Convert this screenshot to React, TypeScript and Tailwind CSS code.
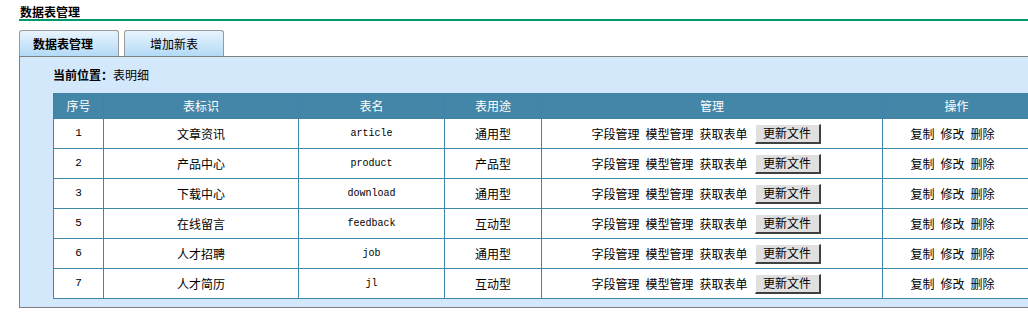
import React from "react";

const rows = [
  { id: "1", label: "文章资讯", name: "article", use: "通用型" },
  { id: "2", label: "产品中心", name: "product", use: "产品型" },
  { id: "3", label: "下载中心", name: "download", use: "通用型" },
  { id: "5", label: "在线留言", name: "feedback", use: "互动型" },
  { id: "6", label: "人才招聘", name: "job", use: "通用型" },
  { id: "7", label: "人才简历", name: "jl", use: "互动型" },
];

const cjk = { fontFamily: '"Noto Sans CJK SC", "Noto Sans", sans-serif' };
const mono = { fontFamily: '"Liberation Mono", "DejaVu Sans Mono", monospace' };

export default function App() {
  return (
    <div
      className="w-[1028px] h-[314px] overflow-hidden bg-white text-[12px] text-black"
      style={cjk}
    >
      <div className="ml-[19px] h-[21px] border-b-2 border-[#00996b] pt-[4px] pl-[1px] font-bold leading-[15px]">
        数据表管理
      </div>
      <div className="ml-[19px] mt-[9px] flex gap-[5px]">
        <div className="w-[100px] h-[26px] border border-b-0 border-[#999999] rounded-t-[3px] bg-gradient-to-b from-[#e8f4fd] to-[#b3daf6] flex items-center justify-center font-bold pr-[12px]">
          数据表管理
        </div>
        <div className="w-[100px] h-[26px] border border-b-0 border-[#999999] rounded-t-[3px] bg-gradient-to-b from-[#e8f4fd] to-[#b3daf6] flex items-center justify-center">
          增加新表
        </div>
      </div>
      <div className="ml-[19px] w-[1100px] h-[252px] border-t border-l border-b border-[#808080] bg-[#d3e8fb] pl-[33px]">
        <div className="h-[36px] flex items-center leading-[14px]">
          <span className="font-bold">当前位置：</span>
          <span>表明细</span>
        </div>
        <table className="table-fixed border-collapse w-[977px]">
          <colgroup>
            <col className="w-[50px]" />
            <col className="w-[195px]" />
            <col className="w-[146px]" />
            <col className="w-[97px]" />
            <col className="w-[341px]" />
            <col className="w-[148px]" />
          </colgroup>
          <thead>
            <tr className="h-[25px] bg-[#4486a8] text-white">
              {["序号", "表标识", "表名", "表用途", "管理", "操作"].map((h) => (
                <th key={h} className="font-normal text-center p-0 border border-[#3f83a8]">
                  {h}
                </th>
              ))}
            </tr>
          </thead>
          <tbody>
            {rows.map((r) => (
              <tr key={r.id} className="h-[30px] bg-white">
                <td className="border border-[#3f86ab] text-center p-0 text-[11px]" style={mono}>
                  {r.id}
                </td>
                <td className="border border-[#3f86ab] text-center p-0">{r.label}</td>
                <td className="border border-[#3f86ab] text-center p-0 text-[10px]" style={mono}>
                  {r.name}
                </td>
                <td className="border border-[#3f86ab] text-center p-0">{r.use}</td>
                <td className="border border-[#3f86ab] text-center p-0">
                  <div className="flex items-center justify-center gap-[6px] pr-[12px]">
                    <span>字段管理</span>
                    <span>模型管理</span>
                    <span>获取表单</span>
                    <span className="ml-[1px] w-[66px] h-[20px] bg-[#e0e0e0] border-t border-l border-r-2 border-b-2 border-t-white border-l-white border-r-[#404040] border-b-[#404040] flex items-center justify-center leading-none">
                      更新文件
                    </span>
                  </div>
                </td>
                <td className="border border-[#3f86ab] text-center p-0">
                  <div className="flex items-center justify-center gap-[6px] pr-[8px]">
                    <span>复制</span>
                    <span>修改</span>
                    <span>删除</span>
                  </div>
                </td>
              </tr>
            ))}
          </tbody>
        </table>
      </div>
    </div>
  );
}
